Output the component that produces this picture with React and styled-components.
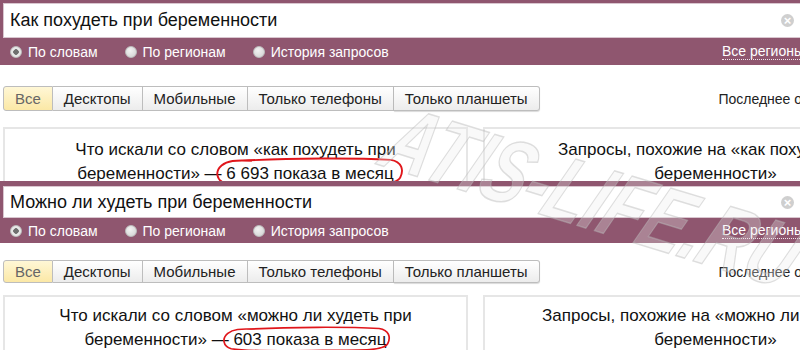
import React from 'react';
import styled, { createGlobalStyle } from 'styled-components';

const GlobalStyle = createGlobalStyle`
    html, body {
        margin: 0;
        padding: 0;
        background: #fff;
        overflow: hidden;
    }
    body {
        font-family: "Liberation Sans", Arial, sans-serif;
    }
`;

const sections = [
    {
        query: 'Как похудеть при беременности',
        word: 'как похудеть при',
        shows: '6 693',
        height: 181,
        top: 3,
        inputH: 35,
        radioH: 27,
        tabsGap: 21,
        tabH: 25,
        panelGap: 16,
        panelPad: 9,
        oval: { left: 214, top: 157, width: 190, height: 30 },
    },
    {
        query: 'Можно ли худеть при беременности',
        word: 'можно ли худеть при',
        shows: '603',
        height: 169,
        top: 5,
        inputH: 32,
        radioH: 25,
        tabsGap: 17,
        tabH: 23,
        panelGap: 12,
        panelPad: 7,
        oval: { left: 221, top: 145, width: 170, height: 26 },
    },
];

const tabs = ['Все', 'Десктопы', 'Мобильные', 'Только телефоны', 'Только планшеты'];
const radios = ['По словам', 'По регионам', 'История запросов'];

const App = () => {
    return (
        <Page>
            <GlobalStyle />
            {sections.map((s) => (
                <Section key={s.query} $h={s.height}>
                    <SearchBar $top={s.top}>
                        <InputBox $h={s.inputH}>
                            <QueryText>{s.query}</QueryText>
                            <ClearIcon>×</ClearIcon>
                        </InputBox>
                        <RadioRow $h={s.radioH}>
                            {radios.map((r, i) => (
                                <RadioItem key={r}>
                                    <Radio $checked={i === 0} />
                                    {r}
                                </RadioItem>
                            ))}
                            <Regions>Все регионы</Regions>
                        </RadioRow>
                    </SearchBar>
                    <TabsRow $gap={s.tabsGap}>
                        <TabGroup>
                            {tabs.map((t, i) => (
                                <Tab key={t} $active={i === 0} $h={s.tabH}>
                                    {t}
                                </Tab>
                            ))}
                        </TabGroup>
                        <Updated>Последнее обновление</Updated>
                    </TabsRow>
                    <Panels $gap={s.panelGap}>
                        <Panel $pad={s.panelPad}>
                            Что искали со словом «{s.word}
                            <br />
                            беременности» — {s.shows} показа в месяц
                        </Panel>
                        <Panel $pad={s.panelPad}>
                            Запросы, похожие на «{s.word}
                            <br />
                            беременности»
                        </Panel>
                    </Panels>
                    <Oval style={s.oval} viewBox="0 0 200 32" preserveAspectRatio="none">
                        <path
                            d="M30 4 C80 1 150 1 186 3 C198 5 200 14 196 22 C192 30 170 30 120 30 C70 31 30 31 12 28 C2 25 1 15 8 9 C14 4 22 3 40 4"
                            fill="none"
                            stroke="#e0161b"
                            strokeWidth="2"
                        />
                    </Oval>
                </Section>
            ))}
            <Watermark>ATIS-LIFE.RU</Watermark>
        </Page>
    );
};

export default App;

const Page = styled.div`
    position: relative;
    width: 800px;
    height: 350px;
    overflow: hidden;
    background: #fff;
`;

const Section = styled.div`
    position: relative;
    height: ${(p) => p.$h}px;
    overflow: hidden;
`;

const SearchBar = styled.div`
    background: #8f566f;
    padding: ${(p) => p.$top}px 0 0 3px;
`;

const InputBox = styled.div`
    display: flex;
    align-items: center;
    justify-content: space-between;
    height: ${(p) => p.$h}px;
    background: #fff;
    border: 1px solid #d9c6cf;
    border-right: none;
    box-sizing: border-box;
    padding: 0 6px 0 6px;
`;

const QueryText = styled.span`
    font-size: 18px;
    color: #111;
`;

const ClearIcon = styled.span`
    display: flex;
    align-items: center;
    justify-content: center;
    width: 13px;
    height: 13px;
    border-radius: 50%;
    background: #cfcfcf;
    color: #fff;
    font-size: 13px;
    font-weight: bold;
    line-height: 1;
`;

const RadioRow = styled.div`
    display: flex;
    align-items: center;
    height: ${(p) => p.$h}px;
    padding-left: 7px;
    gap: 27px;
    color: #fff;
    font-size: 14px;
`;

const RadioItem = styled.label`
    display: flex;
    align-items: center;
    gap: 6px;
    white-space: nowrap;
`;

const Radio = styled.span`
    width: 12px;
    height: 12px;
    border-radius: 50%;
    box-sizing: border-box;
    background: ${(p) =>
        p.$checked
            ? 'radial-gradient(circle, #6f6f6f 0 2.5px, #e8e8e8 3px)'
            : 'radial-gradient(circle at 40% 35%, #f2f2f2, #cfcfcf)'};
    border: 1px solid #bdbdbd;
`;

const Regions = styled.span`
    margin-left: auto;
    margin-right: -4px;
    color: #fff;
    font-size: 14px;
    white-space: nowrap;
    border-bottom: 1px dotted #f0e3e9;
    line-height: 15px;
`;

const TabsRow = styled.div`
    display: flex;
    align-items: center;
    margin-top: ${(p) => p.$gap}px;
    padding-left: 3px;
`;

const TabGroup = styled.div`
    display: flex;
    flex-shrink: 0;
`;

const Tab = styled.div`
    display: flex;
    align-items: center;
    height: ${(p) => p.$h}px;
    padding: 0 11px;
    box-sizing: border-box;
    font-size: 15px;
    white-space: nowrap;
    color: ${(p) => (p.$active ? '#666' : '#222')};
    background: ${(p) =>
        p.$active ? 'linear-gradient(#fff7d6, #fbe8a6)' : 'linear-gradient(#ffffff, #ececec)'};
    border: 1px solid #bdbdbd;
    border-left-width: 0;
    &:first-child {
        border-left-width: 1px;
        border-radius: 3px 0 0 3px;
    }
    &:last-child {
        border-radius: 0 3px 3px 0;
        box-shadow: 0 1px 1px rgba(0, 0, 0, 0.15);
    }
`;

const Updated = styled.span`
    margin-left: auto;
    padding-left: 20px;
    margin-right: -72px;
    font-size: 14px;
    color: #222;
    white-space: nowrap;
`;

const Panels = styled.div`
    display: grid;
    grid-template-columns: 465px 465px;
    gap: 15px;
    margin-top: ${(p) => p.$gap}px;
    padding-left: 3px;
`;

const Panel = styled.div`
    border: 2px solid #e6e6e6;
    border-bottom: none;
    height: 200px;
    padding-top: ${(p) => p.$pad}px;
    box-sizing: border-box;
    text-align: center;
    font-size: 17px;
    line-height: 24px;
    color: #111;
    white-space: nowrap;
`;

const Oval = styled.svg`
    position: absolute;
    overflow: visible;
`;

const Watermark = styled.div`
    position: absolute;
    left: 415px;
    top: 88px;
    font-size: 92px;
    font-weight: bold;
    font-style: italic;
    color: rgba(235, 235, 235, 0.3);
    -webkit-text-stroke: 1.5px rgba(185, 185, 185, 0.45);
    transform: rotate(17deg) skewX(-10deg) scaleX(0.72);
    transform-origin: left top;
    white-space: nowrap;
    pointer-events: none;
`;
